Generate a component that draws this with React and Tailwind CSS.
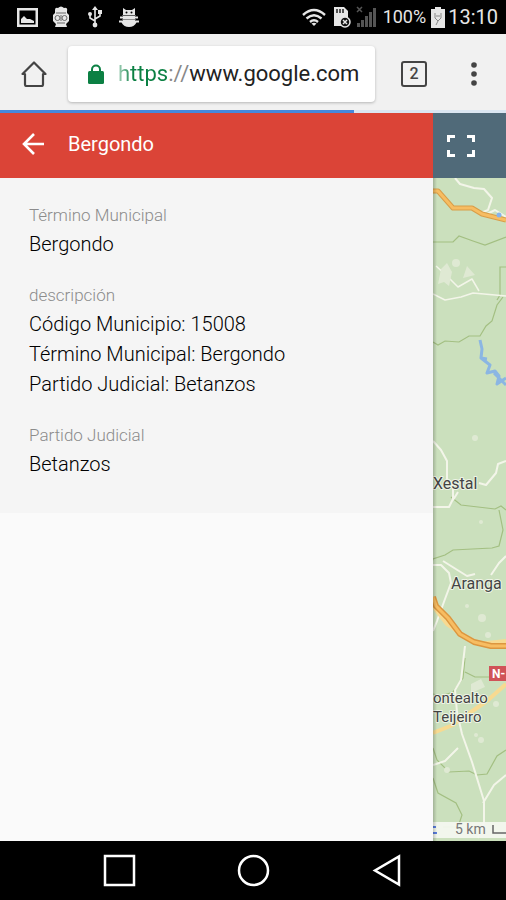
import React from "react";

const details = [
  { label: "Término Municipal", lines: ["Bergondo"] },
  {
    label: "descripción",
    lines: [
      "Código Municipio: 15008",
      "Término Municipal: Bergondo",
      "Partido Judicial: Betanzos",
    ],
  },
  { label: "Partido Judicial", lines: ["Betanzos"] },
];

function StatusBar() {
  return (
    <div className="flex h-[34px] items-center bg-black pl-[17px] pr-2 text-lg text-[#e6e6e6]">
      <svg width="21" height="21" viewBox="0 0 21 21" aria-hidden="true">
        <path fill="#e6e6e6" fillRule="evenodd" d="M0 1h21v19H0zM2.500 3.500v14h16v-14z" />
        <path fill="#e6e6e6" d="M4 16v-4l3-3 3 3h3l4 2v2z" />
      </svg>
      <svg className="ml-[14px]" width="18" height="22" viewBox="0 0 18 22" aria-hidden="true">
        <path fill="#e6e6e6" d="M3 4Q3 1 6 2Q9-1 12 2Q16 1 15 5L15 7L17 9V15L14 18L15 21H3L4 18L1 15V9L3 7z" />
        <g fill="none" stroke="#666" strokeWidth="1">
          <circle cx="5.500" cy="12" r="2.500" />
          <circle cx="12.500" cy="12" r="2.500" />
          <path d="M4 7h10M5 17h8M9 9v6" />
        </g>
      </svg>
      <svg className="ml-[18px]" width="14" height="22" viewBox="0 0 14 22" aria-hidden="true">
        <g fill="none" stroke="#e6e6e6" strokeWidth="1.6">
          <path d="M7 3v16M7 15l-5-3V8M7 13l5-3V7" />
        </g>
        <path fill="#e6e6e6" d="M7 0l3 4H4zM10 4h4v4h-4z" />
        <circle cx="2" cy="8" r="2" fill="#e6e6e6" />
        <circle cx="7" cy="19" r="2.4" fill="#e6e6e6" />
      </svg>
      <svg className="ml-[17px]" width="20" height="21" viewBox="0 0 20 21" aria-hidden="true">
        <path fill="#e6e6e6" d="M4 1l3 2h6l3-2v7H4zM1 9.500h18v2H1zM0 13.500h20v2h-2.500Q15 20 10 20T2.500 15.500H0z" />
        <path fill="#e6e6e6" d="M4 9h12v6H4z" />
        <circle cx="7.500" cy="5.500" r="1" />
        <circle cx="12.500" cy="5.500" r="1" />
        <path stroke="#777" strokeWidth=".8" d="M3 8.500h14M3 12.500h14" />
      </svg>
      <div className="ml-auto flex items-center">
        <svg width="24" height="19" viewBox="0 0 24 19" aria-hidden="true">
          <g fill="none" stroke="#e6e6e6" strokeWidth="2.400">
            <path d="M1 7Q12-3 23 7M4.500 10.500Q12 4 19.500 10.500M8 14Q12 10.500 16 14" />
          </g>
          <path fill="#e6e6e6" d="M9.500 15.500Q12 14 14.500 15.500L12 18z" />
        </svg>
        <svg className="ml-2" width="17" height="22" viewBox="0 0 17 22" aria-hidden="true">
          <path fill="#e6e6e6" d="M0 1h10l4 4v15H0z" />
          <path stroke="#222" strokeWidth="1.500" d="M3 3v4M6 3v4M9 3v4" />
          <circle cx="11" cy="16" r="5" fill="#111" stroke="#e6e6e6" strokeWidth="1.500" />
          <path stroke="#e6e6e6" strokeWidth="1.500" d="M9 14l4 4M13 14l-4 4" />
        </svg>
        <svg className="ml-[5px]" width="21" height="22" viewBox="0 0 21 22" aria-hidden="true">
          <path fill="#555" d="M1 17h3v4H1zM5 14h3v7H5zM9 10h3v11H9zM13 6h3v15h-3zM17 2h3v19h-3z" />
          <path stroke="#555" strokeWidth="1.500" d="M1 1l5 5M6 1L1 6" />
        </svg>
        <span className="ml-[6px]">100%</span>
        <svg className="ml-[5px]" width="14" height="21" viewBox="0 0 14 21" aria-hidden="true">
          <path fill="#e6e6e6" d="M4 0h6v2h4v19H0V2h4z" />
          <path fill="none" stroke="#888" d="M4 6v5l3 3 3-3V6M5 9h4M7 14l-2 4" />
        </svg>
        <span className="ml-[3px] text-xl">13:10</span>
      </div>
    </div>
  );
}

function BrowserBar() {
  return (
    <div className="bg-[#f1f1f1]">
      <div className="flex h-[76px] items-center pl-[21px] pr-[25px] pt-[3px]">
        <button type="button" aria-label="Inicio">
          <svg width="26" height="26" viewBox="0 0 26 26" fill="none" stroke="#444" strokeWidth="2.200" strokeLinejoin="round" aria-hidden="true">
            <path d="M4 13H1.500L13 1.500 24.500 13H22v10.500q0 1.500-1.500 1.500h-15Q4 25 4 23.500z" />
          </svg>
        </button>
        <label className="ml-[21px] flex h-14 min-w-0 flex-1 items-center rounded-sm bg-white pl-5 text-[22px] shadow-[0_1px_3px_rgba(0,0,0,0.25)]">
          <svg className="shrink-0" width="16" height="20" viewBox="0 0 16 20" aria-hidden="true">
            <rect y="7" width="16" height="13" rx="1.500" fill="#0b8043" />
            <path d="M4 8V5.500a4 4 0 0 1 8 0V8" fill="none" stroke="#0b8043" strokeWidth="2" />
          </svg>
          <span className="ml-[14px] bg-linear-to-r from-[#0b804360] to-[#0b8043] to-30% bg-clip-text text-transparent">https</span>
          <span className="text-[#888]">://</span>
          <input className="min-w-0 flex-1 bg-transparent text-[#222] outline-none" type="text" aria-label="Dirección" defaultValue="www.google.com" />
        </label>
        <button type="button" aria-label="Pestañas" className="ml-[26px] flex size-[26px] items-center justify-center rounded-[3px] border-2 border-[#444] text-base font-medium text-[#444]">
          2
        </button>
        <button type="button" aria-label="Menú" className="ml-10 flex w-[14px] justify-center">
          <svg width="6" height="24" viewBox="0 0 6 24" fill="#444" aria-hidden="true">
            <circle cx="3" cy="3" r="2.800" />
            <circle cx="3" cy="12" r="2.800" />
            <circle cx="3" cy="21" r="2.800" />
          </svg>
        </button>
      </div>
      <div className="h-[3px] bg-[#dbe6f2]">
        <div className="h-full w-[70%] bg-[#4688dc]" />
      </div>
    </div>
  );
}

function RegionMap() {
  return (
    <svg className="absolute inset-0 h-full w-full" viewBox="0 0 73 663" preserveAspectRatio="xMinYMin slice" role="img" aria-label="Mapa">
      <rect width="73" height="663" fill="#cbe0bd" />
      <g fill="none" stroke="#a3bf82" strokeWidth="1.200">
        <path d="M0 64h20l6-6 14 5 12 4 21-8M73 89h-6v28l-3 5" />
        <path d="M0 164l5 3 7-4 14 1 10-6h11l6-10 6-5 5-16 6-8" />
        <path d="M18 319l10 8 34 4 6-3 5 4M66 332l4 20-4 16-7 2-39 2-8 5-12 4-2 6" />
        <path d="M32 494l10 5h31M32 480l-2 20-10 14-12 4-8-2M0 570l4 12 12 12 20-1 8 4 10-1 10-18 9-6M0 600l5 15 18 10 6 12-4 12H10" />
      </g>
      <g fill="none" stroke="#f3f5e9" strokeWidth="2" strokeLinejoin="round">
        <path d="M22 0l5 6 14 4 10 1 8 9-4 12-7 3M50 38l12-6 11 7" />
        <path d="M0 116l12 6 16-3 12-4 33 3M3 88l12 11 10 10 14-8 7 12" strokeWidth="1.500" />
        <path d="M0 263l8 9 6 11v18l6 4v16l-4 8H0M20 322l5-8M46 305l7 2 10-12 2-9 8-3" />
        <path d="M0 387h8l8 8 2 10-6 16-8 22-4 10M10 383l16 10 8 5 8-2M58 397l8-12 7-7" />
        <path d="M32 468l-4 34-6 10 2 22 5 22 10 28 12 39v22l-6 15M0 587l12-4 13-13M50 625l11-18 12-10" />
      </g>
      <g fill="#dfe9d3">
        <path d="M8 91l6-6 5 9-3 14-5-4-6 2zM34 88l8 9-12 3zM38 506l10-5 4 8-14 6z" />
        <circle cx="23" cy="85" r="4" />
        <circle cx="42" cy="260" r="3" />
        <circle cx="48" cy="344" r="2" />
        <circle cx="49" cy="440" r="4" />
        <circle cx="34" cy="428" r="2" />
        <circle cx="55" cy="457" r="3" />
        <circle cx="14" cy="592" r="3" />
        <circle cx="48" cy="562" r="3" />
        <circle cx="63" cy="526" r="3" />
        <circle cx="43" cy="557" r="2" />
      </g>
      <path fill="none" stroke="#8bb6e3" strokeWidth="3" strokeLinejoin="round" d="M47 162l2 9-1 9 9 7-3 8 8-2 4 5-2 8 9-6M48 180l6 1M61 195l12 12" />
      <g fill="none" strokeLinejoin="round">
        <path stroke="#d99d48" strokeWidth="5" d="M0 13h5l15 17h19l10 6 24 6" />
        <path stroke="#f7bd62" strokeWidth="3" d="M0 13h5l15 17h19l10 6 24 6" />
        <path stroke="#f7da91" strokeWidth="4" d="M0 428l14 18 19 13 12 7 28-3M0 555l20-8 15-11 19-13 19-17" />
        <path stroke="#dc963f" strokeWidth="6" d="M0 419l3 9 12 12 12 16 14 8 17 4h15" />
        <path stroke="#f7bd62" strokeWidth="3" d="M0 419l3 9 12 12 12 16 14 8 17 4h15" />
      </g>
      <circle cx="66" cy="37" r="2.500" fill="#87b3eb" />
      <rect x="56" y="488" width="20" height="15" fill="#d05358" />
      <rect y="644" width="73" height="16" fill="#f6f8f2" opacity=".9" />
      <g fontFamily="Roboto, sans-serif" fill="#444" stroke="#eef4e6" strokeWidth="2" paintOrder="stroke" strokeLinejoin="round">
        <text x="0" y="311" fontSize="16">Xestal</text>
        <text x="18" y="411" fontSize="16">Aranga</text>
        <text x="0" y="525" fontSize="15">ontealto</text>
        <text x="0" y="544" fontSize="15">Teijeiro</text>
      </g>
      <g fontFamily="Roboto, sans-serif">
        <text x="59" y="500" fontSize="12" fontWeight="700" fill="#fff">N-</text>
        <text x="22" y="656" fontSize="14" fill="#777">5 km</text>
      </g>
      <path fill="none" stroke="#666" strokeWidth="1.500" d="M60 647v8h13" />
      <path stroke="#5c7fe0" strokeWidth="2" d="M0 649h3M0 655h4" />
    </svg>
  );
}

function SystemNav() {
  return (
    <nav className="flex h-[59px] items-center justify-between bg-black px-[103px] text-white">
      <button type="button" aria-label="Recientes">
        <svg width="33" height="33" viewBox="0 0 33 33" fill="none" stroke="currentColor" strokeWidth="2.500" aria-hidden="true">
          <rect x="2" y="2" width="29" height="29" />
        </svg>
      </button>
      <button type="button" aria-label="Pantalla de inicio">
        <svg width="33" height="33" viewBox="0 0 33 33" fill="none" stroke="currentColor" strokeWidth="2.500" aria-hidden="true">
          <circle cx="16.500" cy="16.500" r="14.500" />
        </svg>
      </button>
      <button type="button" aria-label="Atrás">
        <svg width="33" height="33" viewBox="0 0 33 33" fill="none" stroke="currentColor" strokeWidth="2.500" aria-hidden="true">
          <path d="M29 2.500v28L5 16.500z" />
        </svg>
      </button>
    </nav>
  );
}

export default function App() {
  return (
    <div className="flex min-h-screen flex-col bg-[#fafafa] font-[Roboto,sans-serif]">
      <StatusBar />
      <BrowserBar />
      <div className="grid flex-1 grid-cols-[433fr_73fr]">
        <main className="flex flex-col">
          <header className="flex h-[65px] items-center bg-[#db4437] pb-[3px] pl-[22px] text-white">
            <button type="button" aria-label="Volver">
              <svg width="22" height="22" viewBox="0 0 22 22" fill="none" stroke="currentColor" strokeWidth="2.600" aria-hidden="true">
                <path d="M22 11H2M12 1L2 11l10 10" />
              </svg>
            </button>
            <h1 className="ml-6 text-xl">Bergondo</h1>
          </header>
          <dl className="flex flex-col gap-6 bg-[#f5f5f5] px-[29px] pb-[34px] pt-[25px]">
            {details.map((item) => (
              <div key={item.label}>
                <dt className="mb-0.5 text-[17px] font-light leading-6 text-[#8c8c8c]">{item.label}</dt>
                {item.lines.map((line) => (
                  <dd key={line} className="text-xl font-light leading-[30px] text-black">{line}</dd>
                ))}
              </div>
            ))}
          </dl>
        </main>
        <aside className="flex flex-col">
          <div className="flex h-[65px] items-center bg-[#506a79] pl-[14px]">
            <button type="button" aria-label="Pantalla completa">
              <svg width="28" height="22" viewBox="0 0 28 22" fill="none" stroke="#fff" strokeWidth="3" aria-hidden="true">
                <path d="M1.500 7V1.500H8M20 1.500h6.500V7M26.500 15v5.500H20M8 20.500H1.500V15" />
              </svg>
            </button>
          </div>
          <div className="relative flex-1 overflow-hidden">
            <RegionMap />
            <div className="absolute inset-y-0 left-0 w-1 bg-linear-to-r from-black/20 to-transparent" />
          </div>
        </aside>
      </div>
      <SystemNav />
    </div>
  );
}
